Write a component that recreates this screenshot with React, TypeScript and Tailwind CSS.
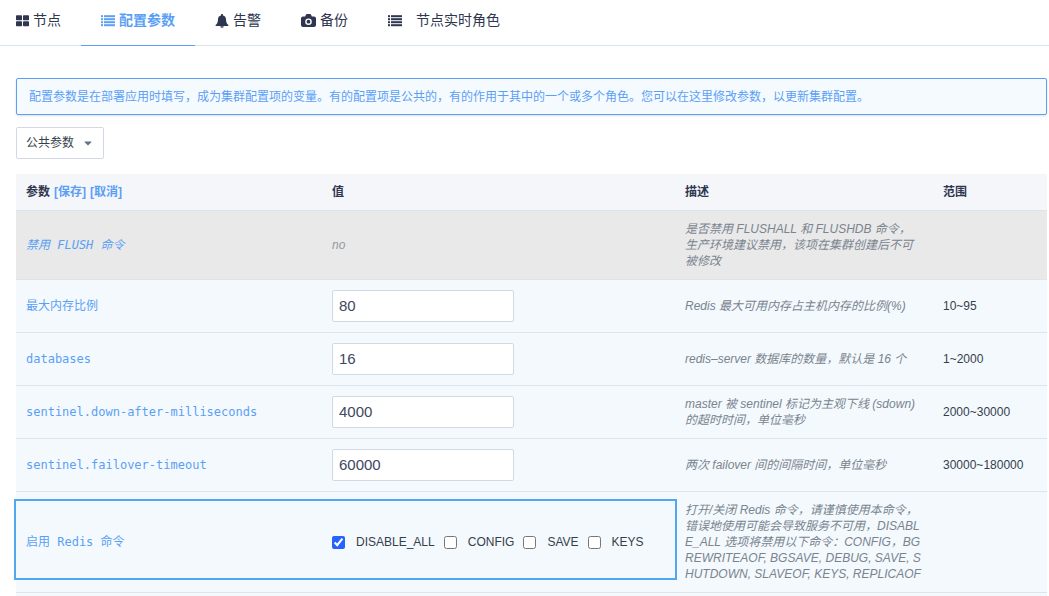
import type { ReactNode } from "react";
import { FaCaretDown } from "react-icons/fa";

interface Param {
  name: string;
  value: string;
  desc: string;
  range: string;
}

const params: Param[] = [
  { name: "最大内存比例", value: "80", desc: "Redis 最大可用内存占主机内存的比例(%)", range: "10~95" },
  { name: "databases", value: "16", desc: "redis–server 数据库的数量，默认是 16 个", range: "1~2000" },
  {
    name: "sentinel.down-after-milliseconds",
    value: "4000",
    desc: "master 被 sentinel 标记为主观下线 (sdown)\n的超时时间，单位毫秒",
    range: "2000~30000",
  },
  {
    name: "sentinel.failover-timeout",
    value: "60000",
    desc: "两次 failover 间的间隔时间，单位毫秒",
    range: "30000~180000",
  },
];

const commands = [
  { name: "DISABLE_ALL", checked: true },
  { name: "CONFIG", checked: false },
  { name: "SAVE", checked: false },
  { name: "KEYS", checked: false },
];

const flushDesc = "是否禁用 FLUSHALL 和 FLUSHDB 命令，\n生产环境建议禁用，该项在集群创建后不可\n被修改";
const commandsDesc =
  "打开/关闭 Redis 命令，请谨慎使用本命令，\n错误地使用可能会导致服务不可用，DISABL\nE_ALL 选项将禁用以下命令：CONFIG，BG\nREWRITEAOF, BGSAVE, DEBUG, SAVE, S\nHUTDOWN, SLAVEOF, KEYS, REPLICAOF";

function GridIcon() {
  return (
    <svg width="13" height="12" viewBox="0 0 13 12" fill="currentColor" aria-hidden="true">
      <rect x="0" y="0.3" width="6" height="5" rx="0.8" />
      <rect x="7" y="0.3" width="6" height="5" rx="0.8" />
      <rect x="0" y="6.3" width="6" height="5" rx="0.8" />
      <rect x="7" y="6.3" width="6" height="5" rx="0.8" />
    </svg>
  );
}

function ListIcon() {
  return (
    <svg width="14" height="12" viewBox="0 0 14 12" fill="currentColor" aria-hidden="true">
      {[0, 3, 6, 9].map((y) => (
        <g key={y}>
          <rect x="0" y={y + 0.2} width="2" height="2" />
          <rect x="3" y={y + 0.2} width="11" height="2" />
        </g>
      ))}
    </svg>
  );
}

function BellIcon() {
  return (
    <svg width="14" height="14" viewBox="0 0 14 14" fill="currentColor" aria-hidden="true">
      <path d="M7 0C6.4 0 6 .4 6 1v.4C4.100 1.800 3 3.300 3 5.200 3 8.400 2 9.900.5 11c0 .6.400 1 1 1h11c.6 0 1-.4 1-1C12 9.900 11 8.400 11 5.200 11 3.300 9.900 1.800 8 1.400V1c0-.6-.4-1-1-1z" />
      <path d="M5.300 12.300a1.700 1.500 0 0 0 3.400 0z" />
    </svg>
  );
}

function CameraIcon() {
  return (
    <svg width="15" height="14" viewBox="0 0 15 14" aria-hidden="true">
      <path
        fill="currentColor"
        d="M2 2.500h2.200l.6-1.500c.2-.5.700-1 1.300-1h2.800c.6 0 1.100.5 1.300 1l.6 1.500H13c1.100 0 2 .9 2 2v6.500c0 1.100-.9 2-2 2H2c-1.100 0-2-.9-2-2V4.500c0-1.100.9-2 2-2z"
      />
      <circle cx="7.500" cy="7.700" r="2.600" fill="none" stroke="white" strokeWidth="1.400" />
    </svg>
  );
}

interface TabProps {
  icon: ReactNode;
  label: string;
  active?: boolean;
  wide?: boolean;
}

function Tab({ icon, label, active, wide }: TabProps) {
  return (
    <a
      href="#"
      className={`-mb-px flex items-center border-b px-5 pt-2.5 pb-3.5 text-sm leading-[21px] ${
        wide ? "gap-3.5" : "gap-1"
      } ${active ? "border-[#5b9ff5] font-bold text-[#5b9ff5]" : "border-transparent text-[#2e3650]"}`}>
      {icon}
      {label}
    </a>
  );
}

function Desc({ text }: { text: string }) {
  return <td className="px-2.5 py-2.5 break-all whitespace-pre-line text-[#79848f] italic">{text}</td>;
}

export default function App() {
  return (
    <div className="bg-white font-['Liberation_Sans','Noto_Sans_CJK_SC',sans-serif] text-xs text-[#343f4c]">
      <nav className="flex border-b border-[#d8e3ed]">
        <div className="-ml-1 flex">
          <Tab icon={<GridIcon />} label="节点" />
          <Tab icon={<ListIcon />} label="配置参数" active />
          <Tab icon={<BellIcon />} label="告警" />
          <Tab icon={<CameraIcon />} label="备份" />
          <Tab icon={<ListIcon />} label="节点实时角色" wide />
        </div>
      </nav>

      <main className="mt-8 mr-0.5 ml-4">
        <p className="rounded-xs border border-[#5b9ff5] bg-[#f5faff] px-3 pt-[9px] pb-[7px] leading-[19px] text-[#5b9ff5] shadow-sm">
          配置参数是在部署应用时填写，成为集群配置项的变量。有的配置项是公共的，有的作用于其中的一个或多个角色。您可以在这里修改参数，以更新集群配置。
        </p>

        <button className="mt-3 flex h-8 items-center gap-2 rounded-xs border border-[#d0d9e5] bg-white px-[9px] text-[#343f4c]">
          公共参数
          <FaCaretDown size={12} className="text-[#667380]" />
        </button>

        <div className="mt-[15px] bg-[#f4f9fd] pb-[3px]">
          <table className="w-full table-fixed border-separate border-spacing-0 text-left leading-4 [&_td]:border-b [&_td]:border-[#dce5ec]">
            <colgroup>
              <col className="w-[306px]" />
              <col />
              <col className="w-[258px]" />
              <col className="w-[114px]" />
            </colgroup>
            <thead>
              <tr className="bg-[#f5f6fa] text-[#2e3650] [&>th]:border-b [&>th]:border-[#d8e5f0] [&>th]:p-2.5">
                <th>
                  <div className="flex gap-1">
                    参数
                    <a href="#" className="text-[#5b9ff5]">
                      [保存]
                    </a>
                    <a href="#" className="text-[#5b9ff5]">
                      [取消]
                    </a>
                  </div>
                </th>
                <th>值</th>
                <th>描述</th>
                <th>范围</th>
              </tr>
            </thead>
            <tbody>
              <tr className="bg-[#e9e9e9] italic">
                <td className="p-2.5 font-['DejaVu_Sans_Mono','Noto_Sans_CJK_SC',monospace] text-[#5b9ff5]">
                  禁用 FLUSH 命令
                </td>
                <td className="p-2.5 text-[#949aa0]">no</td>
                <Desc text={flushDesc} />
                <td />
              </tr>
              {params.map((p) => (
                <tr key={p.name}>
                  <td className="p-2.5 font-['DejaVu_Sans_Mono','Noto_Sans_CJK_SC',monospace] text-[#5b9ff5]">
                    <label htmlFor={p.name}>{p.name}</label>
                  </td>
                  <td className="p-2.5">
                    <input
                      id={p.name}
                      defaultValue={p.value}
                      className="block h-8 w-[182px] rounded-xs border border-[#d0d9e5] bg-white px-1.5 pb-0.5 text-[15px] text-[#404761]"
                    />
                  </td>
                  <Desc text={p.desc} />
                  <td className="p-2.5">{p.range}</td>
                </tr>
              ))}
              <tr className="relative">
                <td className="p-2.5 font-['DejaVu_Sans_Mono','Noto_Sans_CJK_SC',monospace] text-[#5b9ff5]">
                  启用 Redis 命令
                  <span className="pointer-events-none absolute top-[7px] right-[370px] bottom-[13px] -left-0.5 border-2 border-[#52a7ee]" />
                </td>
                <td className="p-2.5">
                  <div className="flex items-center gap-[9px]">
                    {commands.map((c) => (
                      <label key={c.name} className="flex items-center gap-[11px]">
                        <input type="checkbox" defaultChecked={c.checked} className="size-[13px] accent-[#2563ff]" />
                        {c.name}
                      </label>
                    ))}
                  </div>
                </td>
                <Desc text={commandsDesc} />
                <td />
              </tr>
            </tbody>
          </table>
        </div>
      </main>
    </div>
  );
}
